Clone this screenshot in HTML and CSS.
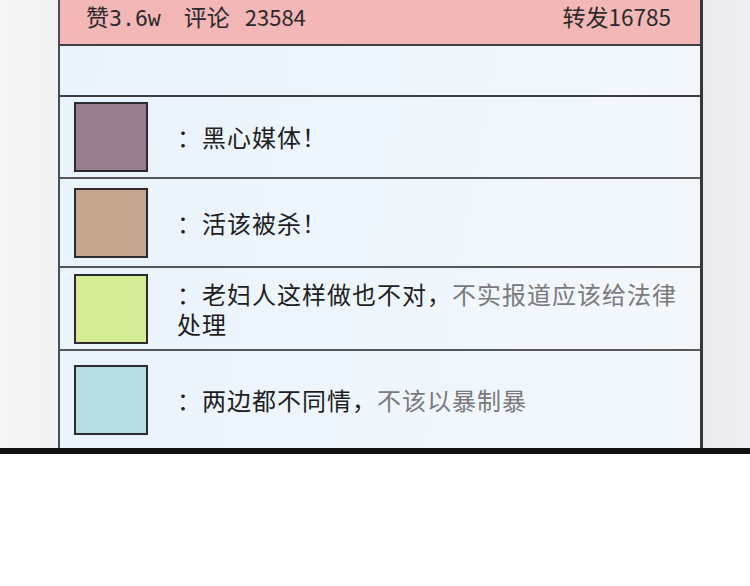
FILE: index.html
```html
<!DOCTYPE html>
<html lang="zh">
<head>
<meta charset="utf-8">
<title>评论</title>
<link rel="stylesheet" href="styles.css">
</head>
<body>
<div class="scene">
  <div class="gutter gutter-left"></div>
  <div class="panel">
    <div class="head">
      <div class="stats">
        <span class="stat">赞<span class="mono">3.6w</span></span>
        <span class="stat">评论<span class="num">23584</span></span>
      </div>
      <span class="stat share">转发<span class="share-num">16785</span></span>
    </div>
    <div class="blank"></div>
    <div class="row row1">
      <div class="avatar av-purple"></div>
      <p class="text">：黑心媒体！</p>
    </div>
    <div class="row row2">
      <div class="avatar av-tan"></div>
      <p class="text">：活该被杀！</p>
    </div>
    <div class="row row3">
      <div class="avatar av-lime"></div>
      <p class="text">：老妇人这样做也不对，<span class="fade">不实报道应该给法律</span>处理</p>
    </div>
    <div class="row row4">
      <div class="avatar av-blue"></div>
      <p class="text">：两边都不同情，<span class="fade">不该以暴制暴</span></p>
    </div>
  </div>
  <div class="gutter gutter-right"></div>
</div>
<div class="bar"></div>
</body>
</html>
```

FILE: styles.css
```css
* { box-sizing: border-box; }
html, body { margin: 0; padding: 0; background: #ffffff; }
body {
  font-family: "Noto Sans CJK SC", "Noto Sans", sans-serif;
  color: #222;
  width: 750px;
  height: 586px;
  overflow: hidden;
}
.scene {
  display: flex;
  height: 448px;
}
.gutter-left {
  width: 58px;
  background: linear-gradient(90deg, #f7f6f6, #f3f2f2);
}
.gutter-right {
  flex: 1;
  background: linear-gradient(90deg, #ebebee, #efeff1);
}
.panel {
  width: 645px;
  display: flex;
  flex-direction: column;
  border-left: 2px solid #4e4e52;
  border-right: 3px solid #36383c;
  background: linear-gradient(100deg, #e9f3fb, #eef6fd 50%, #f3f8fc);
}
.head {
  height: 46px;
  background: #f4b7b7;
  border-bottom: 2px solid #3e3e42;
  display: flex;
  justify-content: space-between;
  align-items: flex-start;
  padding: 1px 29px 0 26px;
  font-size: 23px;
  line-height: 30px;
  color: #2a2a2a;
}
.stats { display: flex; gap: 23px; }
.mono {
  font-family: "DejaVu Sans Mono", "Liberation Mono", monospace;
  font-size: 21.5px;
}
.num {
  margin-left: 15px;
  font-size: 22px;
}
.share-num { font-size: 22.5px; }
.blank {
  height: 51px;
  border-bottom: 2px solid #3e3e42;
}
.row {
  display: flex;
  align-items: center;
  gap: 30px;
  padding-left: 14px;
  border-bottom: 2px solid #55575b;
}
.row1 { height: 82px; }
.row2 { height: 89px; }
.row3 { height: 83px; }
.row4 { height: 97px; border-bottom: none; }
.avatar {
  flex: none;
  width: 74px;
  height: 70px;
  border: 2px solid #2c2c30;
}
.av-purple { background: #977f90; }
.av-tan { background: #c5a78f; }
.av-lime { background: #d5eb94; }
.av-blue { background: #b7dde3; }
.text {
  margin: 0;
  font-size: 24px;
  letter-spacing: 1px;
  line-height: 30px;
  color: #1e1e1e;
  width: 512px;
  margin-left: -1px;
}
.fade { color: #7a7a7c; }
.bar {
  height: 6px;
  background: #111;
}
```
